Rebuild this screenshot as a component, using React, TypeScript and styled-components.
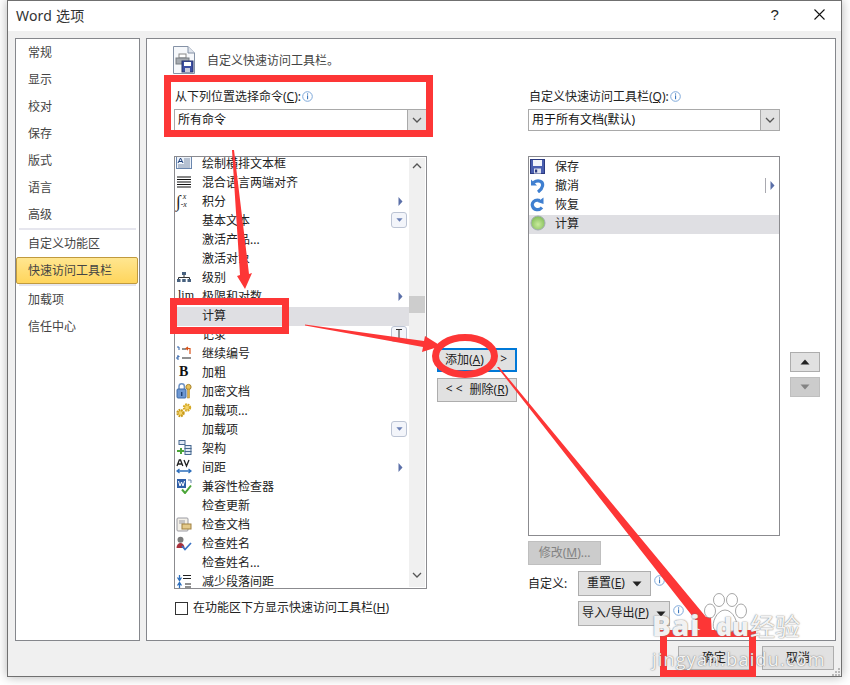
import React from 'react'
import styled, { createGlobalStyle } from 'styled-components'

const GlobalStyle = createGlobalStyle`
    html, body {
        margin: 0;
        padding: 0;
        background: #fff;
        font-family: "Noto Sans", "Noto Sans CJK SC", sans-serif;
        font-size: 12px;
        color: #222;
    }
`
const Page = styled.div`
    position: relative;
    width: 850px;
    height: 685px;
    overflow: hidden;
`
const Window = styled.div`
    box-sizing: border-box;
    width: 835px;
    height: 677px;
    margin-left: 7px;
    background: #f0f0f0;
    border: 1px solid #707070;
    box-shadow: 0 0 10px rgba(0,0,0,0.3);
    display: flex;
    flex-direction: column;
`
const TitleBar = styled.div`
    box-sizing: border-box;
    height: 30px;
    flex: none;
    background: #fff;
    display: flex;
    align-items: center;
    padding: 0 0 3px 8px;
    font-size: 14px;
    color: #333;
    letter-spacing: 0.2px;
`
const Help = styled.span`
    margin-left: auto;
    margin-right: 35px;
    font-family: "Liberation Sans", sans-serif;
    font-size: 15px;
    color: #222;
`
const CloseBox = styled.svg`
    width: 11px;
    height: 11px;
    margin-right: 16px;
`
const DialogBody = styled.div`
    display: flex;
    gap: 6px;
    padding: 7px 0 0 7px;
`
const Sidebar = styled.nav`
    box-sizing: border-box;
    width: 125px;
    height: 603px;
    background: #fff;
    border: 1px solid #85878c;
`
const SideItem = styled.div<{ $active?: boolean }>`
    box-sizing: border-box;
    height: 27px;
    margin-right: 1px;
    padding: 0 0 2px 12px;
    display: flex;
    align-items: center;
    color: #444;
    ${p => p.$active && `
        background: linear-gradient(#ffe690, #ffd55c);
        border: 1px solid #c09a3e;
        border-radius: 2px;
        padding-left: 11px;
    `}
`
const SideRule = styled.div`
    height: 2px;
    margin: 0 3px;
    background: #e6e6ee;
`
const Main = styled.main`
    box-sizing: border-box;
    width: 690px;
    height: 603px;
    background: #fff;
    border: 1px solid #85878c;
    padding: 6px 0 0 26px;
`
const Header = styled.div`
    display: flex;
    align-items: center;
    height: 28px;
    gap: 12px;
    margin-bottom: 14px;
    padding-top: 1px;
    color: #444;
`
const Columns = styled.div`
    display: flex;
`
const LeftCol = styled.section`
    width: 254px;
    flex: none;
`
const RightCol = styled.section`
    width: 253px;
    flex: none;
`
const MidCol = styled.div`
    width: 100px;
    flex: none;
    box-sizing: border-box;
    padding: 260px 0 0 10px;
    display: flex;
    flex-direction: column;
    gap: 6px;
`
const MoveCol = styled.div`
    margin: 264px 0 0 10px;
    display: flex;
    flex-direction: column;
    gap: 5px;
`
const FieldLabel = styled.div`
    box-sizing: border-box;
    height: 21px;
    padding: 0 0 5px 2px;
    display: flex;
    align-items: center;
    gap: 1px;
    color: #222;
`
const Combo = styled.div`
    box-sizing: border-box;
    height: 22px;
    margin-left: 1px;
    margin-bottom: 25px;
    border: 1px solid #a9a9a9;
    display: flex;
    align-items: center;
    padding-left: 3px;
    color: #111;
    justify-content: space-between;
`
const ComboText = styled.span`
    margin-top: -2px;
`
const ComboDrop = styled.div`
    width: 18px;
    height: 20px;
    background: #e1e1e1;
    border-left: 1px solid #a9a9a9;
    display: flex;
    align-items: center;
    justify-content: center;
`
const ListBox = styled.div<{ $h: number }>`
    box-sizing: border-box;
    height: ${p => p.$h}px;
    margin-left: 1px;
    border: 1px solid #8b8b8f;
    background: #fff;
    overflow: hidden;
    display: flex;
`
const Rows = styled.div<{ $top: number }>`
    flex: 1;
    margin-top: ${p => p.$top}px;
`
const Row = styled.div<{ $active?: boolean }>`
    box-sizing: border-box;
    height: 19px;
    padding-bottom: 3px;
    display: flex;
    align-items: center;
    background: ${p => (p.$active ? '#dfdfe3' : 'transparent')};
    color: #222;
`
const IconSlot = styled.div<{ $w: number }>`
    width: ${p => p.$w}px;
    flex: none;
    display: flex;
    align-items: center;
    padding-left: 1px;
    box-sizing: border-box;
`
const Trail = styled.div`
    width: 18px;
    height: 14px;
    margin-left: auto;
    display: flex;
    align-items: center;
    justify-content: center;
    position: relative;
`
const MathGlyph = styled.span`
    font-family: "Liberation Serif", serif;
    font-size: 12px;
    line-height: 12px;
    color: #111;
    white-space: nowrap;
    padding-left: 2px;
    margin-top: -2px;
`
const BoldGlyph = styled(MathGlyph)`
    font-weight: 700;
    font-size: 14px;
    padding-left: 3px;
    margin-top: 0;
`
const IntegralWrap = styled.span`
    display: flex;
    align-items: center;
    font-family: "Liberation Serif", serif;
    color: #222;
`
const IntegralSign = styled.span`
    font-size: 17px;
    line-height: 15px;
`
const IntegralLimits = styled.span`
    display: flex;
    flex-direction: column;
    font-size: 8px;
    line-height: 8px;
    font-style: italic;
`
const TrailBox = styled.div`
    box-sizing: border-box;
    width: 16px;
    height: 16px;
    margin-left: -2px;
    border: 1px solid #bcc4d4;
    border-radius: 3px;
    background: #f3f5fa;
    display: flex;
    align-items: center;
    justify-content: center;
`
const SplitRule = styled.span`
    width: 1px;
    height: 15px;
    margin-right: 4px;
    background: #a9a9b0;
`
const Scrollbar = styled.div`
    width: 16px;
    flex: none;
    margin: 1px 1px 1px 0;
    background: #f0f0f0;
    display: flex;
    flex-direction: column;
    align-items: center;
    padding-top: 5px;
    box-sizing: border-box;
`
const Thumb = styled.div`
    width: 16px;
    height: 17px;
    margin-top: 127px;
    background: #cdcdcd;
`
const BottomChevron = styled.div`
    margin-top: auto;
    padding-bottom: 5px;
`
const CheckRow = styled.label`
    display: flex;
    align-items: center;
    gap: 5px;
    margin: 13px 0 0 2px;
    height: 13px;
`
const CheckText = styled.span`
    margin-top: -3px;
`
const CheckBox = styled.span`
    box-sizing: border-box;
    width: 13px;
    height: 13px;
    border: 1px solid #333;
    background: #fff;
`
const Button = styled.div<{ $w: number; $h?: number; $focus?: boolean; $off?: boolean }>`
    box-sizing: border-box;
    width: ${p => p.$w}px;
    height: ${p => p.$h ?? 24}px;
    flex: none;
    background: ${p => (p.$off ? '#cccccc' : '#e1e1e1')};
    border: ${p => (p.$focus ? '2px solid #0078d7' : p.$off ? '1px solid #bfbfbf' : '1px solid #adadad')};
    color: ${p => (p.$off ? '#838383' : '#222')};
    display: flex;
    align-items: center;
    justify-content: center;
    gap: 7px;
    white-space: nowrap;
`
const ButtonText = styled.span`
    margin-top: -3px;
`
const SplitLabel = styled.div`
    width: 100%;
    display: flex;
    justify-content: space-between;
    padding: 0 8px 0 6px;
    box-sizing: border-box;
`
const CustomRow = styled.div<{ $top: number }>`
    display: flex;
    align-items: flex-start;
    margin-top: ${p => p.$top}px;
    padding-left: 1px;
`
const CustomLabel = styled.div`
    width: 50px;
    line-height: 25px;
    flex: none;
`
const InfoWrap = styled.div`
    margin: 2px 0 0 3px;
`
const Footer = styled.footer`
    display: flex;
    justify-content: flex-end;
    gap: 12px;
    margin-top: 5px;
    padding-right: 7px;
    position: relative;
`
const Grip = styled.svg`
    position: absolute;
    right: 0;
    bottom: -7px;
    width: 9px;
    height: 9px;
`
const Overlay = styled.svg`
    position: absolute;
    inset: 0;
    width: 850px;
    height: 685px;
    pointer-events: none;
`
const Paw = styled.svg`
    position: absolute;
    left: 703px;
    top: 593px;
    width: 44px;
    height: 42px;
`
const Mark = styled.div<{ $x: number; $y: number; $size: number; $bold?: boolean; $spread?: number }>`
    position: absolute;
    left: ${p => p.$x}px;
    top: ${p => p.$y}px;
    font-size: ${p => p.$size}px;
    line-height: 1;
    font-family: "Open Sans", "Noto Sans CJK SC", sans-serif;
    font-weight: ${p => (p.$bold ? 800 : 400)};
    color: rgba(255,255,255,0.92);
    text-shadow: 0 0 1px rgba(110,110,110,0.9), 0 0 2px rgba(130,130,130,0.6);
    letter-spacing: ${p => p.$spread ?? 0}px;
    pointer-events: none;
    white-space: nowrap;
`

const Chevron = ({ up, color = '#555' }: { up?: boolean; color?: string }) => (
    <svg width="10" height="6" viewBox="0 0 10 6">
        <path d={up ? 'M1 5 L5 1 L9 5' : 'M1 1 L5 5 L9 1'} fill="none" stroke={color} strokeWidth="1.3" />
    </svg>
)

const Info = () => (
    <svg width="11" height="11" viewBox="0 0 11 11">
        <circle cx="5.5" cy="5.5" r="4.8" fill="#fff" stroke="#7fa9da" />
        <rect x="5" y="2.4" width="1.1" height="1.2" fill="#3d78bd" />
        <rect x="5" y="4.4" width="1.1" height="3.8" fill="#3d78bd" />
    </svg>
)

const Caret = ({ up, color = '#222', size = 10 }: { up?: boolean; color?: string; size?: number }) => (
    <svg width={size} height={size * 0.6} viewBox="0 0 10 6">
        <path d={up ? 'M5 0.5 L9.5 5.5 L0.5 5.5 Z' : 'M0.5 0.5 L9.5 0.5 L5 5.5 Z'} fill={color} />
    </svg>
)

const SubArrow = () => (
    <svg width="5" height="9" viewBox="0 0 5 9">
        <path d="M0.5 0 L4.5 4.5 L0.5 9 Z" fill="#5a6fa8" />
    </svg>
)

const RowIcon = ({ name }: { name: string }) => {
    switch (name) {
        case 'textbox':
            return (
                <svg width="16" height="14" viewBox="0 0 16 14">
                    <rect x="0.5" y="0.5" width="15" height="12" fill="#eef3fa" stroke="#6a86ad" />
                    <path d="M2 7 L4.5 2 L7 7 M3 5.5 H6" stroke="#1c3f7a" fill="none" />
                    <path d="M8 3 H14 M8 5 H14 M8 7 H14 M2 9 H14 M2 11 H14" stroke="#7c8ea8" />
                </svg>
            )
        case 'justify':
            return (
                <svg width="16" height="12" viewBox="0 0 16 12">
                    <path d="M1 1 H15 M1 3.5 H15 M1 6 H15 M1 8.5 H15 M1 11 H15" stroke="#111" strokeWidth="1.2" />
                </svg>
            )
        case 'integral':
            return (
                <IntegralWrap>
                    <IntegralSign>∫</IntegralSign>
                    <IntegralLimits><span>&nbsp;x</span><span>-x</span></IntegralLimits>
                </IntegralWrap>
            )
        case 'hierarchy':
            return (
                <svg width="16" height="12" viewBox="0 0 16 12">
                    <rect x="6" y="1" width="4" height="3" fill="#47617f" />
                    <path d="M8 4 V6.5 M2.5 8 V6.5 H13.5 V8" stroke="#333" fill="none" />
                    <rect x="1" y="8" width="3.5" height="3" fill="#47617f" />
                    <rect x="6.2" y="8" width="3.5" height="3" fill="#47617f" />
                    <rect x="11.5" y="8" width="3.5" height="3" fill="#47617f" />
                </svg>
            )
        case 'lim':
            return <MathGlyph>lim</MathGlyph>
        case 'numbering':
            return (
                <svg width="16" height="15" viewBox="0 0 16 15">
                    <path d="M1 1 h2 v3 M1 10 h2 v1 h-2 v2 h2" stroke="#2a5fa8" fill="none" />
                    <path d="M6 3 H10 M6 12 H15" stroke="#222" strokeWidth="1.2" />
                    <path d="M14 8 V2.5 H10.5 M12 1 L10 2.5 L12 4" stroke="#d8531a" strokeWidth="1.2" fill="none" />
                </svg>
            )
        case 'bold':
            return <BoldGlyph>B</BoldGlyph>
        case 'lock':
            return (
                <svg width="16" height="16" viewBox="0 0 16 16">
                    <path d="M3 6 V3.5 a2.7 2.7 0 0 1 5.4 0 V6" fill="none" stroke="#6f93c4" strokeWidth="1.5" />
                    <rect x="1" y="6" width="9" height="9" rx="1" fill="#6d97d2" stroke="#3e6aa8" />
                    <rect x="5" y="9" width="1.4" height="4" fill="#1e3f73" />
                    <circle cx="12.5" cy="4" r="2.6" fill="#e9c25b" stroke="#a8832a" />
                    <rect x="11.5" y="6" width="2" height="9" fill="#e0b348" stroke="#a8832a" strokeWidth="0.5" />
                </svg>
            )
        case 'gears':
            return (
                <svg width="16" height="15" viewBox="0 0 16 15">
                    <circle cx="4.5" cy="10" r="3" fill="#f3d36b" stroke="#c89a1a" strokeWidth="2.4" strokeDasharray="1.6 0.8" />
                    <circle cx="11" cy="4.5" r="3" fill="#f3d36b" stroke="#d6a925" strokeWidth="2.4" strokeDasharray="1.6 0.8" />
                </svg>
            )
        case 'schema':
            return (
                <svg width="16" height="16" viewBox="0 0 16 16">
                    <rect x="3" y="0.5" width="6" height="4" fill="#dfe8f5" stroke="#47688f" />
                    <rect x="9" y="5.5" width="6" height="3" fill="#dfe8f5" stroke="#47688f" />
                    <rect x="9" y="8.5" width="6" height="3" fill="#dfe8f5" stroke="#47688f" />
                    <rect x="9" y="11.5" width="6" height="3" fill="#dfe8f5" stroke="#47688f" />
                    <path d="M4 8 H6 V10 H8 V12 H6 V14 H4 V12 H1 V10 H4 Z" fill="#4ba538" />
                </svg>
            )
        case 'spacing':
            return (
                <svg width="16" height="16" viewBox="0 0 16 16">
                    <path d="M1 7 L3.3 1 H4.5 L6.8 7 M2 5 H5.8 M8 1 L10.5 7 L13 1" stroke="#222" strokeWidth="1.3" fill="none" />
                    <path d="M1 12 H15 M3.5 10 L1 12 L3.5 14 M12.5 10 L15 12 L12.5 14" stroke="#2e6fbc" strokeWidth="1.3" fill="none" />
                </svg>
            )
        case 'compat':
            return (
                <svg width="16" height="16" viewBox="0 0 16 16">
                    <rect x="1" y="1" width="9" height="9" fill="#2f5ea8" />
                    <path d="M2.5 3 L4 8 L5.5 4 L7 8 L8.5 3" stroke="#fff" fill="none" />
                    <path d="M12 2 H15 V5" stroke="#6a86ad" fill="none" />
                    <path d="M6 11.5 L9 15 L15 7.5" stroke="#4ba538" strokeWidth="2" fill="none" />
                </svg>
            )
        case 'inspect':
            return (
                <svg width="16" height="15" viewBox="0 0 16 15">
                    <rect x="1" y="1" width="11" height="13" rx="1" fill="#f3f0e8" stroke="#9a9aa2" />
                    <path d="M3 4 H9 M3 6 H9" stroke="#9a9aa2" />
                    <rect x="6" y="7" width="9" height="5" fill="#e3c98a" stroke="#a08040" />
                </svg>
            )
        case 'person':
            return (
                <svg width="16" height="15" viewBox="0 0 16 15">
                    <circle cx="4.5" cy="3.8" r="3" fill="#7a7a7a" />
                    <path d="M0.5 12 a4 5 0 0 1 8 0 Z" fill="#a8303c" />
                    <path d="M6 10 L9 13.5 L15 7" stroke="#3a72c4" strokeWidth="1.7" fill="none" />
                </svg>
            )
        case 'paragraph':
            return (
                <svg width="16" height="15" viewBox="0 0 16 15">
                    <path d="M7 1.5 H15 M7 4.5 H15 M9 10 H15 M9 13 H15" stroke="#222" strokeWidth="1.1" />
                    <path d="M3.5 1 V5 M1.5 3.5 L3.5 6.5 L5.5 3.5 M3.5 14 V10 M1.5 11.5 L3.5 8.5 L5.5 11.5" stroke="#2e6fbc" strokeWidth="1.3" fill="none" />
                </svg>
            )
        case 'save':
            return (
                <svg width="15" height="15" viewBox="0 0 15 15">
                    <rect x="0.5" y="0.5" width="14" height="14" fill="#4a5fb0" stroke="#2c3a80" />
                    <rect x="3" y="1" width="9" height="6" fill="#f2f4fa" />
                    <rect x="4" y="9.5" width="7" height="5" fill="#dfe3ee" />
                    <rect x="5" y="10.5" width="2.2" height="3" fill="#2c3a80" />
                </svg>
            )
        case 'undo':
            return (
                <svg width="15" height="15" viewBox="0 0 15 15">
                    <path d="M1 1.5 L1 7.5 L7 7.5 Z" fill="#3f7fd0" />
                    <path d="M3.5 4.5 C8 1.5 13.5 3 12.5 8 C12 11 10 12.5 8 14" fill="none" stroke="#3f7fd0" strokeWidth="3.2" />
                </svg>
            )
        case 'redo':
            return (
                <svg width="15" height="15" viewBox="0 0 15 15">
                    <path d="M13.5 0.5 L13.5 7 L7.5 5 Z" fill="#3f7fd0" />
                    <path d="M10 3.5 C4 2 1.5 6 2.5 9 C3.5 13 9 14 12 10.5" fill="none" stroke="#3f7fd0" strokeWidth="3.2" />
                </svg>
            )
        case 'calc':
            return (
                <svg width="16" height="16" viewBox="0 0 16 16">
                    <defs>
                        <radialGradient id="calcBall" cx="50%" cy="60%" r="55%">
                            <stop offset="0%" stopColor="#c9eb9c" />
                            <stop offset="100%" stopColor="#86bf5e" />
                        </radialGradient>
                    </defs>
                    <circle cx="8" cy="8" r="7" fill="url(#calcBall)" stroke="#a3adb4" />
                </svg>
            )
        default:
            return null
    }
}

type Command = { label: string; icon?: string; trail?: 'arrow' | 'drop' | 'cursor' | 'split'; active?: boolean }

const commands: Command[] = [
    { label: '绘制横排文本框', icon: 'textbox' },
    { label: '混合语言两端对齐', icon: 'justify' },
    { label: '积分', icon: 'integral', trail: 'arrow' },
    { label: '基本文本', trail: 'drop' },
    { label: '激活产品...' },
    { label: '激活对象' },
    { label: '级别', icon: 'hierarchy' },
    { label: '极限和对数', icon: 'lim', trail: 'arrow' },
    { label: '计算', active: true },
    { label: '记录', trail: 'cursor' },
    { label: '继续编号', icon: 'numbering' },
    { label: '加粗', icon: 'bold' },
    { label: '加密文档', icon: 'lock' },
    { label: '加载项...', icon: 'gears' },
    { label: '加载项', trail: 'drop' },
    { label: '架构', icon: 'schema' },
    { label: '间距', icon: 'spacing', trail: 'arrow' },
    { label: '兼容性检查器', icon: 'compat' },
    { label: '检查更新' },
    { label: '检查文档', icon: 'inspect' },
    { label: '检查姓名', icon: 'person' },
    { label: '检查姓名...' },
    { label: '减少段落间距', icon: 'paragraph' },
]

const toolbarItems: Command[] = [
    { label: '保存', icon: 'save' },
    { label: '撤消', icon: 'undo', trail: 'split' },
    { label: '恢复', icon: 'redo' },
    { label: '计算', icon: 'calc', active: true },
]

const sideTop = ['常规', '显示', '校对', '保存', '版式', '语言', '高级']

const RED = '#fd3636'

const Trailing = ({ kind }: { kind?: Command['trail'] }) => {
    if (kind === 'arrow') return <Trail><SubArrow /></Trail>
    if (kind === 'split') return <Trail><SplitRule /><SubArrow /></Trail>
    if (kind === 'drop') {
        return (
            <Trail>
                <TrailBox><Caret color="#6a7fb5" size={7} /></TrailBox>
            </Trail>
        )
    }
    if (kind === 'cursor') {
        return (
            <Trail>
                <TrailBox>
                    <svg width="8" height="10" viewBox="0 0 8 10">
                        <path d="M1 0.5 H7 M4 0.5 V9.5 M1 9.5 H7" stroke="#333" fill="none" />
                    </svg>
                </TrailBox>
            </Trail>
        )
    }
    return null
}

const App: React.FC = () => {
    return (
        <Page>
            <GlobalStyle />
            <Window>
                <TitleBar>
                    Word 选项
                    <Help>?</Help>
                    <CloseBox viewBox="0 0 11 11">
                        <path d="M0.5 0.5 L10.5 10.5 M10.5 0.5 L0.5 10.5" stroke="#111" strokeWidth="1.1" />
                    </CloseBox>
                </TitleBar>
                <DialogBody>
                    <Sidebar>
                        {sideTop.map(item => <SideItem key={item}>{item}</SideItem>)}
                        <SideRule />
                        <SideItem>自定义功能区</SideItem>
                        <SideItem $active>快速访问工具栏</SideItem>
                        <SideRule />
                        <SideItem>加载项</SideItem>
                        <SideItem>信任中心</SideItem>
                    </Sidebar>
                    <Main>
                        <Header>
                            <svg width="22" height="28" viewBox="0 0 22 28">
                                <path d="M0.5 0.5 H15 L21.5 7 V27.5 H0.5 Z" fill="#f6f8fb" stroke="#8592a6" />
                                <path d="M15 0.5 V7 H21.5" fill="#dfe4ec" stroke="#8592a6" />
                                <rect x="6" y="8" width="7" height="4" fill="#fff" stroke="#888" />
                                <rect x="3" y="12" width="13" height="6" fill="#a4a9af" stroke="#777c82" />
                                <rect x="9" y="15" width="11" height="11" fill="#3c4fa3" stroke="#28346f" />
                                <rect x="11" y="16" width="7" height="4" fill="#fff" />
                                <rect x="12" y="22" width="5" height="4" fill="#ccd" />
                            </svg>
                            <span>自定义快速访问工具栏。</span>
                        </Header>
                        <Columns>
                            <LeftCol>
                                <FieldLabel><span>从下列位置选择命令(<u>C</u>):</span><Info /></FieldLabel>
                                <Combo><ComboText>所有命令</ComboText><ComboDrop><Chevron /></ComboDrop></Combo>
                                <ListBox $h={433}>
                                    <Rows $top={-2}>
                                        {commands.map((c, i) => (
                                            <Row key={i} $active={c.active}>
                                                <IconSlot $w={27}>{c.icon && <RowIcon name={c.icon} />}</IconSlot>
                                                {c.label}
                                                <Trailing kind={c.trail} />
                                            </Row>
                                        ))}
                                    </Rows>
                                    <Scrollbar>
                                        <Chevron up />
                                        <Thumb />
                                        <BottomChevron><Chevron /></BottomChevron>
                                    </Scrollbar>
                                </ListBox>
                                <CheckRow><CheckBox /><CheckText>在功能区下方显示快速访问工具栏(<u>H</u>)</CheckText></CheckRow>
                            </LeftCol>
                            <MidCol>
                                <Button $w={80} $focus>
                                    <SplitLabel>
                                        <ButtonText>添加(<u>A</u>)</ButtonText>
                                        <ButtonText>&gt;</ButtonText>
                                    </SplitLabel>
                                </Button>
                                <Button $w={80}>
                                    <ButtonText>&lt; &lt;</ButtonText>
                                    <ButtonText>删除(<u>R</u>)</ButtonText>
                                </Button>
                            </MidCol>
                            <RightCol>
                                <FieldLabel><span>自定义快速访问工具栏(<u>Q</u>):</span><Info /></FieldLabel>
                                <Combo><ComboText>用于所有文档(默认)</ComboText><ComboDrop><Chevron /></ComboDrop></Combo>
                                <ListBox $h={380}>
                                    <Rows $top={1}>
                                        {toolbarItems.map(c => (
                                            <Row key={c.label} $active={c.active}>
                                                <IconSlot $w={26}>{c.icon && <RowIcon name={c.icon} />}</IconSlot>
                                                {c.label}
                                                <Trailing kind={c.trail} />
                                            </Row>
                                        ))}
                                    </Rows>
                                </ListBox>
                                <CustomRow $top={5}>
                                    <Button $w={73} $off><ButtonText>修改(<u>M</u>)...</ButtonText></Button>
                                </CustomRow>
                                <CustomRow $top={6}>
                                    <CustomLabel>自定义:</CustomLabel>
                                    <Button $w={73} $h={25}><ButtonText>重置(<u>E</u>)</ButtonText><Caret /></Button>
                                    <InfoWrap><Info /></InfoWrap>
                                </CustomRow>
                                <CustomRow $top={5}>
                                    <CustomLabel />
                                    <Button $w={92} $h={25}><ButtonText>导入/导出(<u>P</u>)</ButtonText><Caret /></Button>
                                    <InfoWrap><Info /></InfoWrap>
                                </CustomRow>
                            </RightCol>
                            <MoveCol>
                                <Button $w={30} $h={20}><Caret up /></Button>
                                <Button $w={30} $h={20} $off><Caret color="#838383" /></Button>
                            </MoveCol>
                        </Columns>
                    </Main>
                </DialogBody>
                <Footer>
                    <Button $w={72}><ButtonText>确定</ButtonText></Button>
                    <Button $w={72}><ButtonText>取消</ButtonText></Button>
                    <Grip viewBox="0 0 9 9">
                        <path d="M6 0 h2 v2 h-2 Z M3 3 h2 v2 h-2 Z M6 3 h2 v2 h-2 Z M0 6 h2 v2 h-2 Z M3 6 h2 v2 h-2 Z M6 6 h2 v2 h-2 Z" fill="#b8b8b8" />
                    </Grip>
                </Footer>
            </Window>

            <Overlay viewBox="0 0 850 685">
                <polygon points="232,150 234,150 249,274 252,273 245,289 237,276 240,275" fill={RED} />
                <rect x="167.5" y="78.5" width="262" height="55" fill="none" stroke={RED} strokeWidth="7" />
                <rect x="173.5" y="301.5" width="112" height="29" fill="none" stroke={RED} strokeWidth="7" />
                <polygon points="305,324.5 424,341 425,336 441,346 422,352 423,347 305,325.5" fill={RED} />
                <ellipse cx="465" cy="356" rx="29.5" ry="18.5" fill="none" stroke={RED} strokeWidth="7" />
                <polygon points="497,367 499,367 706,617 711,617 712,636 693,626 697,622" fill={RED} />
                <rect x="663.5" y="633.5" width="89" height="40" fill="none" stroke={RED} strokeWidth="7" />
            </Overlay>

            <Paw viewBox="0 0 44 42">
                <g fill="rgba(255,255,255,0.8)" stroke="rgba(130,130,130,0.7)">
                    <ellipse cx="7" cy="18" rx="5.5" ry="7" />
                    <ellipse cx="16" cy="7" rx="5.5" ry="6.5" />
                    <ellipse cx="29" cy="7" rx="5.5" ry="6.5" />
                    <ellipse cx="38" cy="18" rx="5.5" ry="7" />
                    <path d="M22 17 C30 17 36 30 33 36 C29 41 15 41 11 36 C8 30 14 17 22 17 Z" />
                </g>
            </Paw>
            <Mark $x={652} $y={611} $size={28} $bold $spread={1}>Bai</Mark>
            <Mark $x={716} $y={614} $size={25} $bold>du</Mark>
            <Mark $x={750} $y={614} $size={25}>经验</Mark>
            <Mark $x={652} $y={650} $size={18} $spread={1.2}>jingyan.baidu.com</Mark>
        </Page>
    )
}

export default App
